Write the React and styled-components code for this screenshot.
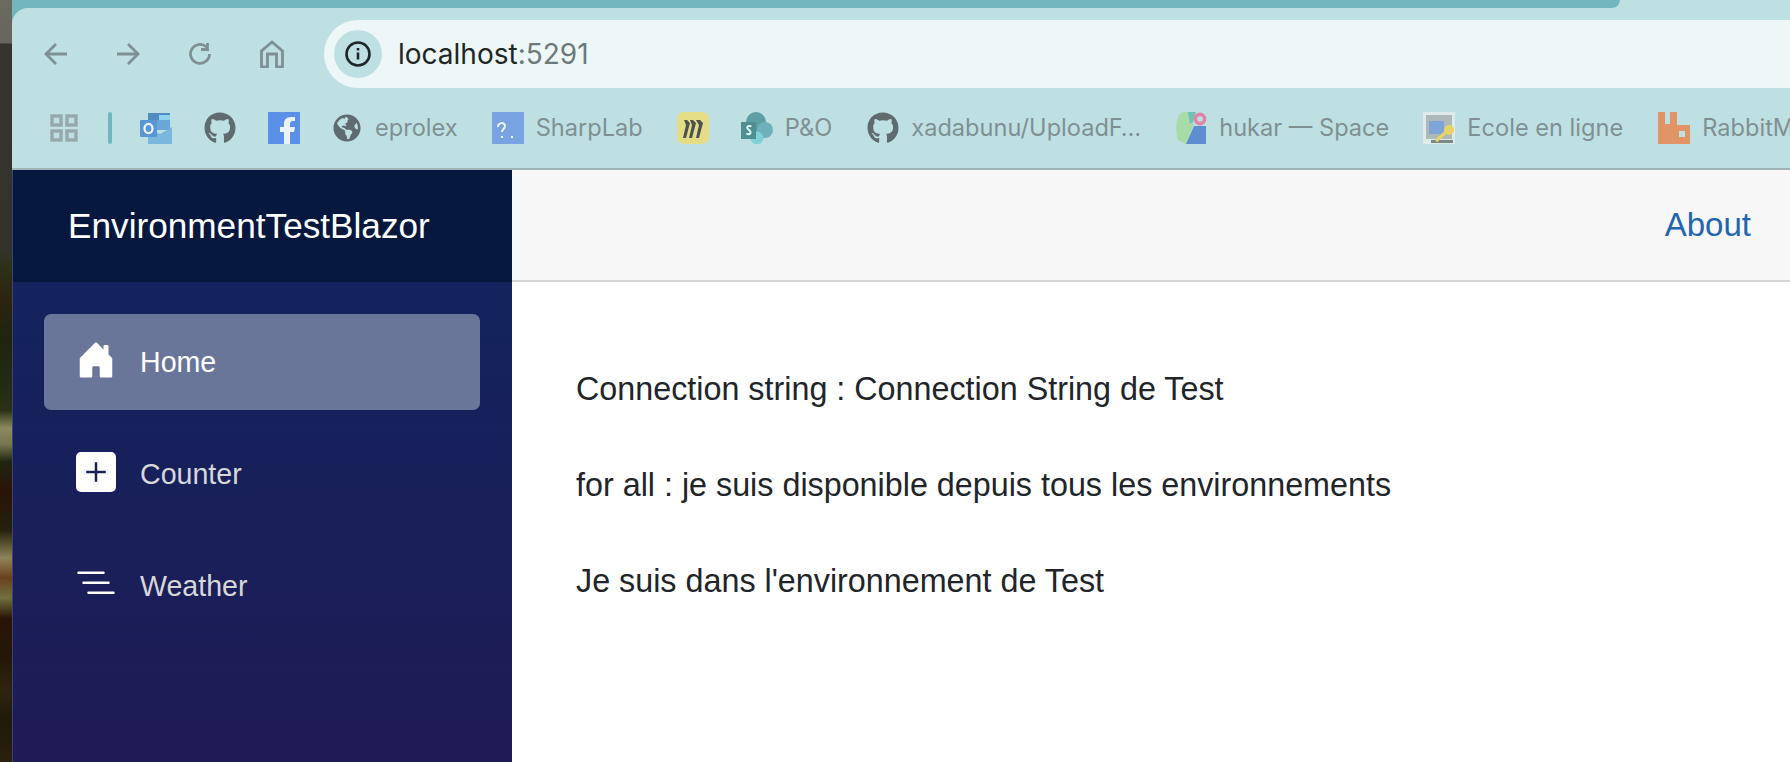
import React from 'react';
import styled, { createGlobalStyle } from 'styled-components';
import { FaGithub, FaGlobeAmericas } from 'react-icons/fa';

const GlobalStyle = createGlobalStyle`
  html, body {
    margin: 0;
    height: 100%;
    overflow: hidden;
    background: #fff;
  }
  * { box-sizing: border-box; }
`;

const Page = styled.div`
  display: flex;
  width: 1790px;
  height: 762px;
  overflow: hidden;
  font-family: "Liberation Sans", Arial, sans-serif;
`;

// bit of desktop wallpaper visible left of the browser window
const Wallpaper = styled.div`
  flex: 0 0 12px;
  background: linear-gradient(180deg,
    #6a6a60 0, #66665c 43px, #35352d 44px, #33332b 250px, #2d3018 268px,
    #2b2410 300px, #1e2410 340px, #222a14 381px, #2a3016 410px, #8a8a60 428px,
    #77784e 444px, #1e2410 462px, #2a1408 490px, #24200c 530px, #8d8458 558px,
    #6a4020 578px, #6f7040 598px, #2a1408 618px, #241808 660px, #2f2410 690px,
    #1f1a0a 720px, #2a200e 762px);
`;

const Browser = styled.div`
  flex: 1;
  min-width: 0;
  display: flex;
  flex-direction: column;
`;

const Chrome = styled.header`
  flex: 0 0 170px;
  background: #74b6c0;
  display: flex;
  flex-direction: column;
`;

const TabStrip = styled.div`
  flex: 0 0 8px;
  background: #bfe0e2;
`;

const ActiveTab = styled.div`
  width: 1608px;
  height: 8px;
  background: #74b6c0;
  border-bottom-right-radius: 14px;
`;

const Toolbar = styled.div`
  flex: 1;
  background: #bfe0e2;
  border-top-left-radius: 16px;
  border-bottom: 2px solid #9fb3b6;
  display: flex;
  flex-direction: column;
  overflow: hidden;
`;

const AddressRow = styled.div`
  display: flex;
  align-items: center;
  padding-top: 12px;
  height: 80px;
`;

const NavButtons = styled.div`
  flex: 0 0 312px;
  display: flex;
  align-items: center;
  gap: 48px;
  padding-left: 32px;
  color: #7f9093;

  svg { flex: none; }
`;

const Omnibox = styled.div`
  flex: 1;
  height: 68px;
  background: #eef7f8;
  border-radius: 34px 0 0 34px;
  display: flex;
  align-items: center;
  padding-left: 10px;
`;

const InfoBadge = styled.div`
  width: 48px;
  height: 48px;
  border-radius: 50%;
  background: #bfe0e2;
  display: flex;
  align-items: center;
  justify-content: center;
  color: #1f2628;
  margin-right: 16px;
`;

const Host = styled.span`
  font-family: Inter, "Liberation Sans", sans-serif;
  font-size: 28px;
  color: #1f2628;
`;

const Port = styled.span`
  color: #6b7a7c;
`;

const BookmarkBar = styled.div`
  display: flex;
  align-items: center;
  height: 32px;
  margin-top: 24px;
  padding-left: 38px;
  white-space: nowrap;

  svg { flex: none; }
`;

const AppsSeparator = styled.div`
  flex: none;
  width: 4px;
  height: 32px;
  border-radius: 2px;
  background: #74b6c0;
  margin: 0 28px 0 30px;
`;

const Bookmark = styled.div`
  display: flex;
  align-items: center;
  gap: ${p => p.$gap || 12}px;
  margin-right: ${p => p.$after || 32}px;
  color: #5f6b6e;
  flex: none;
`;

const BookmarkLabel = styled.span`
  font-family: Inter, "Liberation Sans", sans-serif;
  font-size: 23.6px;
  line-height: 30px;
  color: #7f9093;
`;

const Content = styled.div`
  flex: 1;
  display: flex;
  min-height: 0;
`;

const Sidebar = styled.aside`
  flex: 0 0 500px;
  background: linear-gradient(180deg, #10255f 0%, #1f1b56 100%);
  border-left: 1px solid #39427a;
  display: flex;
  flex-direction: column;
`;

const Brand = styled.div`
  height: 112px;
  background: #07183e;
  color: #fff;
  font-size: 35.2px;
  display: flex;
  align-items: center;
  padding-left: 55px;
`;

const NavList = styled.nav`
  display: flex;
  flex-direction: column;
  gap: 16px;
  padding: 32px 32px 0 31px;
`;

const NavItem = styled.a`
  height: 96px;
  border-radius: 7px;
  display: flex;
  align-items: center;
  padding-left: 32px;
  gap: 24px;
  font-size: 28.6px;
  color: ${p => (p.$active ? '#fff' : '#d7d7d7')};
  background: ${p => (p.$active ? '#6a7699' : 'transparent')};
`;

const NavIcon = styled.svg`
  width: 40px;
  height: 40px;
  fill: #fff;
  margin-top: -4px;
  flex: none;
`;

const Main = styled.main`
  flex: 1;
  min-width: 0;
  background: #fff;
`;

const TopRow = styled.div`
  height: 112px;
  background: #f7f7f7;
  border-bottom: 2px solid #d6d5d5;
  display: flex;
  align-items: center;
  justify-content: flex-end;
  padding-right: 39px;
`;

const AboutLink = styled.a`
  font-size: 33px;
  color: #1f65b0;
`;

const Article = styled.article`
  display: flex;
  flex-direction: column;
  gap: 96px;
  padding: 107px 0 0 64px;
  font-size: 32.3px;
  line-height: 0;
  color: #212529;
`;

const Line = styled.p`
  margin: 0;
`;

const ChromeIcon = ({ d, h = 24 }) => (
  <svg width="24" height={h} viewBox={`0 0 24 ${h}`} fill="none" stroke="currentColor" strokeWidth="2.8">
    <path d={d} />
  </svg>
);

const AppsIcon = () => (
  <svg width="28" height="28" viewBox="0 0 28 28" fill="none" stroke="#98a8aa" strokeWidth="3.4">
    <rect x="2" y="2" width="9" height="9" />
    <rect x="17" y="2" width="9" height="9" />
    <rect x="2" y="17" width="9" height="9" />
    <rect x="17" y="17" width="9" height="9" />
  </svg>
);

const OutlookIcon = () => (
  <svg width="32" height="32" viewBox="0 0 32 32">
    <rect x="8" y="1" width="22" height="14" fill="#4f8cc0" />
    <rect x="19" y="3" width="11" height="9" fill="#8fd3ee" />
    <rect x="8" y="8" width="22" height="10" fill="#6aa6d6" />
    <path d="M8 17l12 5 12-7v17H8z" fill="#79b7dc" />
    <rect x="0" y="8" width="17" height="17" rx="1" fill="#5b96d4" />
    <ellipse cx="8.5" cy="16.5" rx="4" ry="4.6" fill="none" stroke="#eef7f8" strokeWidth="2.2" />
  </svg>
);

const FacebookIcon = () => (
  <svg width="32" height="32" viewBox="0 0 32 32">
    <rect width="32" height="32" fill="#5b90e8" />
    <path d="M22 32V20h4l1-5h-5v-3c0-2 1-3 3-3h2V5h-4c-5 0-7 3-7 7v3h-4v5h4v12z" fill="#eaf2f6" />
  </svg>
);

const SharpLabIcon = () => (
  <svg width="32" height="32" viewBox="0 0 32 32">
    <rect width="32" height="32" fill="#79a3e2" />
    <path d="M6 15c0-5 7-5 7-1 0 3-3 3-3 6M10 24v2M20 24v2" fill="none" stroke="#eef7f8" strokeWidth="2" />
  </svg>
);

const MiroIcon = () => (
  <svg width="32" height="32" viewBox="0 0 32 32">
    <rect width="32" height="32" rx="7" fill="#e5dd85" />
    <path d="M7 8h3l3 3-4 15H6l3-13zM13 8h3l3 3-4 15h-3l3-13zM19 8h4l3 3-4 15h-3l3-13z" fill="#4c5254" />
  </svg>
);

const SharePointIcon = () => (
  <svg width="32" height="32" viewBox="0 0 32 32">
    <circle cx="15" cy="10" r="10" fill="#5f9ea3" />
    <circle cx="24" cy="18" r="8" fill="#6fb1bb" />
    <circle cx="16" cy="26" r="6.5" fill="#80d0d8" />
    <rect x="0" y="10" width="15" height="17" fill="#4f8f92" />
    <path d="M10.5 14.5c-3-1.6-5.5 .2-3.6 2.5 2.2 1.6 3.8 2.6 2.4 4.6-1.4 1-3 .6-4-.2" fill="none" stroke="#eef7f8" strokeWidth="1.8" />
  </svg>
);

const HukarIcon = () => (
  <svg width="32" height="32" viewBox="0 0 32 32">
    <path d="M4 3C1 8 0 20 3 28l8 4 8-20-5-12H8z" fill="#a7dba8" />
    <path d="M13 0h8l-3 10-3 2z" fill="#6fc0b8" />
    <path d="M19 14h12v18H11z" fill="#5d8fd0" />
    <circle cx="25" cy="7" r="4.6" fill="none" stroke="#e183a7" strokeWidth="3.6" />
  </svg>
);

const EcoleIcon = () => (
  <svg width="32" height="32" viewBox="0 0 32 32">
    <rect width="32" height="32" fill="#dfeaea" />
    <rect x="3" y="3" width="26" height="24" fill="#aeb9ba" />
    <rect x="6" y="9" width="15" height="13" fill="#7ea4d8" />
    <rect x="8" y="28" width="22" height="3" fill="#7c8788" />
    <path d="M13 29l10-9" stroke="#e8d368" strokeWidth="3.4" />
    <circle cx="26" cy="18" r="5" fill="#e8d368" />
  </svg>
);

const RabbitIcon = () => (
  <svg width="32" height="32" viewBox="0 0 32 32">
    <path d="M0 0h7v12h5V0h7v13h13v19H0zM21 19v6h6v-6z" fill="#e09468" fillRule="evenodd" />
  </svg>
);

const HomeGlyph = () => (
  <NavIcon viewBox="0 0 16 16">
    <path d="M6.5 14.5v-3.505c0-.245.25-.495.5-.495h2c.25 0 .5.25.5.5v3.5a.5.5 0 0 0 .5.5h4a.5.5 0 0 0 .5-.5v-7a.5.5 0 0 0-.146-.354L13 5.793V2.5a.5.5 0 0 0-.5-.5h-1a.5.5 0 0 0-.5.5v1.293L8.354 1.146a.5.5 0 0 0-.708 0l-6 6A.5.5 0 0 0 1.5 7.5v7a.5.5 0 0 0 .5.5h4a.5.5 0 0 0 .5-.5Z" />
  </NavIcon>
);

const PlusGlyph = () => (
  <NavIcon viewBox="0 0 16 16">
    <path d="M2 0a2 2 0 0 0-2 2v12a2 2 0 0 0 2 2h12a2 2 0 0 0 2-2V2a2 2 0 0 0-2-2H2zm6.5 4.5v3h3a.5.5 0 0 1 0 1h-3v3a.5.5 0 0 1-1 0v-3h-3a.5.5 0 0 1 0-1h3v-3a.5.5 0 0 1 1 0z" />
  </NavIcon>
);

const ListGlyph = () => (
  <NavIcon viewBox="0 0 16 16">
    <path fillRule="evenodd" d="M4.5 11.5A.5.5 0 0 1 5 11h10a.5.5 0 0 1 0 1H5a.5.5 0 0 1-.5-.5zm-2-4A.5.5 0 0 1 3 7h10a.5.5 0 0 1 0 1H3a.5.5 0 0 1-.5-.5zm-2-4A.5.5 0 0 1 1 3h10a.5.5 0 0 1 0 1H1a.5.5 0 0 1-.5-.5z" />
  </NavIcon>
);

const bookmarks = [
  { id: 'outlook', icon: <OutlookIcon /> },
  { id: 'github', icon: <FaGithub size={32} /> },
  { id: 'facebook', icon: <FacebookIcon />, after: 33 },
  { id: 'eprolex', icon: <FaGlobeAmericas size={28} />, label: 'eprolex', gap: 14, after: 34 },
  { id: 'sharplab', icon: <SharpLabIcon />, label: 'SharpLab', after: 34 },
  { id: 'miro', icon: <MiroIcon /> },
  { id: 'po', icon: <SharePointIcon />, label: 'P&O', after: 35 },
  { id: 'upload', icon: <FaGithub size={32} />, label: 'xadabunu/UploadF…', after: 34 },
  { id: 'hukar', icon: <HukarIcon />, label: 'hukar — Space', after: 34 },
  { id: 'ecole', icon: <EcoleIcon />, label: 'Ecole en ligne', after: 35 },
  { id: 'rabbit', icon: <RabbitIcon />, label: 'RabbitMQ' },
];

const navItems = [
  { label: 'Home', glyph: <HomeGlyph />, active: true },
  { label: 'Counter', glyph: <PlusGlyph /> },
  { label: 'Weather', glyph: <ListGlyph /> },
];

const lines = [
  'Connection string : Connection String de Test',
  'for all : je suis disponible depuis tous les environnements',
  "Je suis dans l'environnement de Test",
];

export default function App() {
  return (
    <Page>
      <GlobalStyle />
      <Wallpaper />
      <Browser>
        <Chrome>
          <TabStrip>
            <ActiveTab />
          </TabStrip>
          <Toolbar>
            <AddressRow>
              <NavButtons>
                <ChromeIcon d="M23 12H3M12 2L2 12l10 10" />
                <ChromeIcon d="M1 12h20M12 2l10 10-10 10" />
                <ChromeIcon d="M21.5 12a9.5 9.5 0 1 1-3-7M19.5 1v6.5H13" />
                <ChromeIcon h={28} d="M1.5 27V11L12 2l10.5 9v16h-6V14h-9v13z" />
              </NavButtons>
              <Omnibox>
                <InfoBadge>
                  <svg width="26" height="26" viewBox="0 0 26 26" fill="none" stroke="currentColor" strokeWidth="2.6">
                    <circle cx="13" cy="13" r="11.5" />
                    <path d="M13 11.5v7M13 7v2.6" />
                  </svg>
                </InfoBadge>
                <Host>localhost<Port>:5291</Port></Host>
              </Omnibox>
            </AddressRow>
            <BookmarkBar>
              <AppsIcon />
              <AppsSeparator />
              {bookmarks.map(b => (
                <Bookmark key={b.id} $gap={b.gap} $after={b.after}>
                  {b.icon}
                  {b.label && <BookmarkLabel>{b.label}</BookmarkLabel>}
                </Bookmark>
              ))}
            </BookmarkBar>
          </Toolbar>
        </Chrome>
        <Content>
          <Sidebar>
            <Brand>EnvironmentTestBlazor</Brand>
            <NavList>
              {navItems.map(item => (
                <NavItem key={item.label} $active={item.active}>
                  {item.glyph}
                  {item.label}
                </NavItem>
              ))}
            </NavList>
          </Sidebar>
          <Main>
            <TopRow>
              <AboutLink>About</AboutLink>
            </TopRow>
            <Article>
              {lines.map(line => (
                <Line key={line}>{line}</Line>
              ))}
            </Article>
          </Main>
        </Content>
      </Browser>
    </Page>
  );
}
